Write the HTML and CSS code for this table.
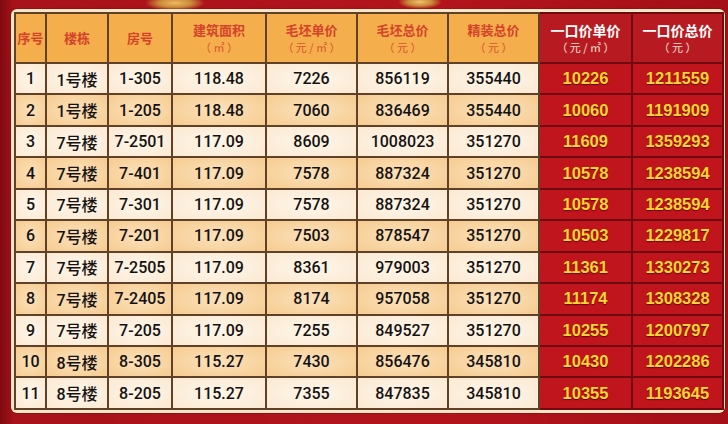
FILE: index.html
```html
<!DOCTYPE html>
<html lang="zh-CN">
<head>
<meta charset="utf-8">
<title>一口价房源表</title>
<link rel="stylesheet" href="styles.css">
</head>
<body>
<div class="page">
  <div class="frame">
    <table class="price">
      <colgroup>
        <col class="c1"><col class="c2"><col class="c3"><col class="c4"><col class="c5"><col class="c6"><col class="c7"><col class="c8"><col class="c9">
      </colgroup>
      <thead>
        <tr>
          <th><span class="t1">序号</span></th>
          <th><span class="t1">楼栋</span></th>
          <th><span class="t1">房号</span></th>
          <th><span class="t1">建筑面积</span><span class="t2">（ ㎡ ）</span></th>
          <th><span class="t1">毛坯单价</span><span class="t2">（ 元 / ㎡ ）</span></th>
          <th><span class="t1">毛坯总价</span><span class="t2">（ 元 ）</span></th>
          <th><span class="t1">精装总价</span><span class="t2">（ 元 ）</span></th>
          <th class="r"><span class="t1">一口价单价</span><span class="t2">（ 元 / ㎡ ）</span></th>
          <th class="r"><span class="t1">一口价总价</span><span class="t2">（ 元 ）</span></th>
        </tr>
      </thead>
      <tbody>
        <tr><td>1</td><td>1号楼</td><td>1-305</td><td>118.48</td><td>7226</td><td>856119</td><td>355440</td><td class="r">10226</td><td class="r">1211559</td></tr>
        <tr><td>2</td><td>1号楼</td><td>1-205</td><td>118.48</td><td>7060</td><td>836469</td><td>355440</td><td class="r">10060</td><td class="r">1191909</td></tr>
        <tr><td>3</td><td>7号楼</td><td>7-2501</td><td>117.09</td><td>8609</td><td>1008023</td><td>351270</td><td class="r">11609</td><td class="r">1359293</td></tr>
        <tr><td>4</td><td>7号楼</td><td>7-401</td><td>117.09</td><td>7578</td><td>887324</td><td>351270</td><td class="r">10578</td><td class="r">1238594</td></tr>
        <tr><td>5</td><td>7号楼</td><td>7-301</td><td>117.09</td><td>7578</td><td>887324</td><td>351270</td><td class="r">10578</td><td class="r">1238594</td></tr>
        <tr><td>6</td><td>7号楼</td><td>7-201</td><td>117.09</td><td>7503</td><td>878547</td><td>351270</td><td class="r">10503</td><td class="r">1229817</td></tr>
        <tr><td>7</td><td>7号楼</td><td>7-2505</td><td>117.09</td><td>8361</td><td>979003</td><td>351270</td><td class="r">11361</td><td class="r">1330273</td></tr>
        <tr><td>8</td><td>7号楼</td><td>7-2405</td><td>117.09</td><td>8174</td><td>957058</td><td>351270</td><td class="r">11174</td><td class="r">1308328</td></tr>
        <tr><td>9</td><td>7号楼</td><td>7-205</td><td>117.09</td><td>7255</td><td>849527</td><td>351270</td><td class="r">10255</td><td class="r">1200797</td></tr>
        <tr><td>10</td><td>8号楼</td><td>8-305</td><td>115.27</td><td>7430</td><td>856476</td><td>345810</td><td class="r">10430</td><td class="r">1202286</td></tr>
        <tr><td>11</td><td>8号楼</td><td>8-205</td><td>115.27</td><td>7355</td><td>847835</td><td>345810</td><td class="r">10355</td><td class="r">1193645</td></tr>
      </tbody>
    </table>
  </div>
</div>
</body>
</html>
```
FILE: styles.css
```css
html, body {
  margin: 0;
  padding: 0;
}
body {
  width: 728px;
  height: 424px;
  overflow: hidden;
  font-family: "Liberation Sans", "Noto Sans CJK SC", sans-serif;
  background:
    radial-gradient(ellipse 30px 8px at 175px 3px, #f0b860 0%, #c98a3a 55%, rgba(180,40,20,0) 100%),
    radial-gradient(ellipse 22px 7px at 420px 2px, #f2c070 0%, #c98a3a 55%, rgba(180,40,20,0) 100%),
    linear-gradient(90deg, #7e0a10 0px, #a8121a 14px, #b3141c 60%, #a50f17 100%);
}
.page {
  padding: 9px 3px 13px 11px;
}
.frame {
  background: #fbe6c6;
  border-radius: 6px;
  padding: 3px;
  box-shadow: 0 0 2px rgba(60, 0, 0, 0.5);
}
.price {
  width: 708px;
  height: 396px;
  border-collapse: collapse;
  table-layout: fixed;
}
.c1 { width: 31px; }
.c2 { width: 62px; }
.c3 { width: 64px; }
.c4 { width: 94px; }
.c5 { width: 91px; }
.c6 { width: 91px; }
.c7 { width: 91px; }
.c8 { width: 93px; }
.c9 { width: 91px; }

.price th, .price td {
  border: 2px solid #5e4128;
  padding: 0;
  text-align: center;
  vertical-align: middle;
  white-space: nowrap;
}
.price thead tr {
  height: 50px;
}
.price tbody tr {
  height: 31.45px;
}
.price th {
  background: #f5ae4c;
  color: #d4432a;
  font-family: "Noto Sans CJK SC", "Liberation Sans", sans-serif;
  font-weight: 700;
}
.t1 {
  display: block;
  font-size: 13px;
  line-height: 18px;
}
.t2 {
  display: block;
  font-size: 11px;
  line-height: 17px;
  font-weight: 400;
  color: #d9532e;
}
.price th.r {
  background: #b71b21;
  color: #fff;
  border-color: #6f0b10;
}
.price th.r .t1 {
  font-size: 14px;
}
.price th.r .t2 {
  color: #f7e3dc;
}
.price td {
  font-size: 16px;
  color: #161210;
  font-family: "Roboto", "Noto Sans CJK SC", sans-serif;
  font-weight: 500;
  background: radial-gradient(ellipse at center, #fef6ea 0%, #fbe9d2 100%);
}
.price tbody tr:nth-child(even) td {
  background: radial-gradient(ellipse at center, #fbe2bc 0%, #f6cb8f 100%);
}
.price tbody td.r,
.price tbody tr:nth-child(even) td.r {
  background: #c0151d;
  border-color: #6f0b10;
  color: #ffd632;
  font-family: "Liberation Sans", sans-serif;
  font-weight: 700;
  font-size: 16.5px;
  text-shadow: 0 1px 1px #6a0408;
}
```
